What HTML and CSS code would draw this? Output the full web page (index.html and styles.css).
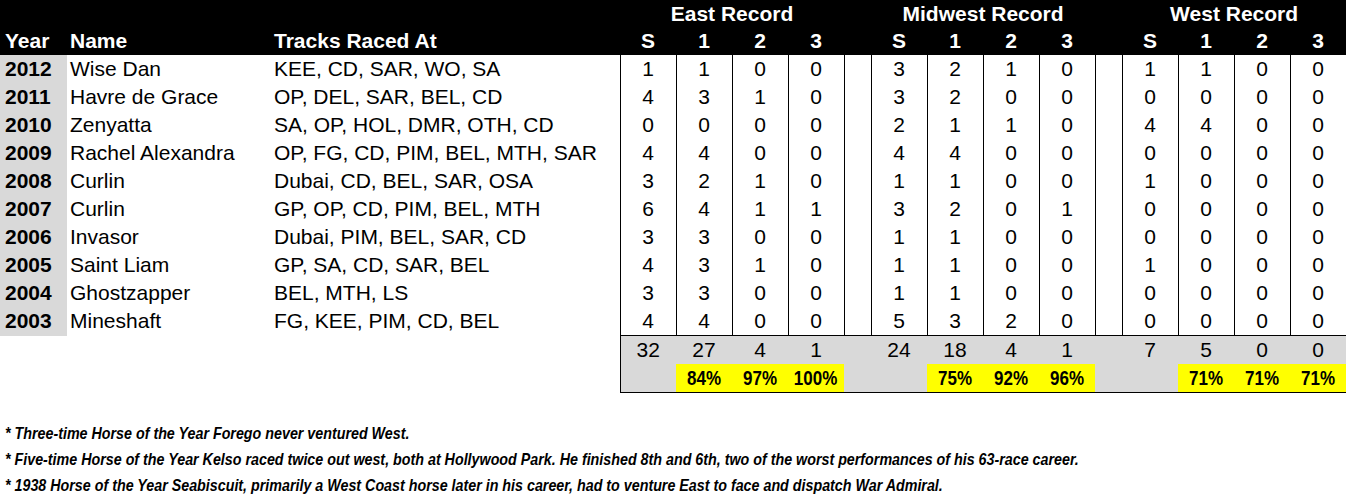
FILE: index.html
```html
<!DOCTYPE html>
<html>
<head>
<meta charset="utf-8">
<link rel="stylesheet" href="styles.css">
</head>
<body>
<table class="rec">
  <colgroup>
    <col class="c-year"><col class="c-name"><col class="c-tracks">
    <col class="c-n"><col class="c-n"><col class="c-n"><col class="c-n">
    <col class="c-sp">
    <col class="c-n"><col class="c-n"><col class="c-n"><col class="c-n">
    <col class="c-sp">
    <col class="c-n"><col class="c-n"><col class="c-n"><col class="c-n">
  </colgroup>
  <thead>
    <tr class="h1">
      <th></th><th></th><th></th>
      <th colspan="4" class="grp">East Record</th>
      <th></th>
      <th colspan="4" class="grp">Midwest Record</th>
      <th></th>
      <th colspan="4" class="grp">West Record</th>
    </tr>
    <tr class="h2">
      <th class="l year">Year</th><th class="l">Name</th><th class="l">Tracks Raced At</th>
      <th>S</th><th>1</th><th>2</th><th>3</th><th></th>
      <th>S</th><th>1</th><th>2</th><th>3</th><th></th>
      <th>S</th><th>1</th><th>2</th><th>3</th>
    </tr>
  </thead>
  <tbody>
    <tr><td class="year">2012</td><td class="name">Wise Dan</td><td class="tr">KEE, CD, SAR, WO, SA</td>
      <td class="n first">1</td><td class="n">1</td><td class="n">0</td><td class="n">0</td><td class="sp"></td>
      <td class="n">3</td><td class="n">2</td><td class="n">1</td><td class="n">0</td><td class="sp"></td>
      <td class="n">1</td><td class="n">1</td><td class="n">0</td><td class="n">0</td></tr>
    <tr><td class="year">2011</td><td class="name">Havre de Grace</td><td class="tr">OP, DEL, SAR, BEL, CD</td>
      <td class="n first">4</td><td class="n">3</td><td class="n">1</td><td class="n">0</td><td class="sp"></td>
      <td class="n">3</td><td class="n">2</td><td class="n">0</td><td class="n">0</td><td class="sp"></td>
      <td class="n">0</td><td class="n">0</td><td class="n">0</td><td class="n">0</td></tr>
    <tr><td class="year">2010</td><td class="name">Zenyatta</td><td class="tr">SA, OP, HOL, DMR, OTH, CD</td>
      <td class="n first">0</td><td class="n">0</td><td class="n">0</td><td class="n">0</td><td class="sp"></td>
      <td class="n">2</td><td class="n">1</td><td class="n">1</td><td class="n">0</td><td class="sp"></td>
      <td class="n">4</td><td class="n">4</td><td class="n">0</td><td class="n">0</td></tr>
    <tr><td class="year">2009</td><td class="name">Rachel Alexandra</td><td class="tr">OP, FG, CD, PIM, BEL, MTH, SAR</td>
      <td class="n first">4</td><td class="n">4</td><td class="n">0</td><td class="n">0</td><td class="sp"></td>
      <td class="n">4</td><td class="n">4</td><td class="n">0</td><td class="n">0</td><td class="sp"></td>
      <td class="n">0</td><td class="n">0</td><td class="n">0</td><td class="n">0</td></tr>
    <tr><td class="year">2008</td><td class="name">Curlin</td><td class="tr">Dubai, CD, BEL, SAR, OSA</td>
      <td class="n first">3</td><td class="n">2</td><td class="n">1</td><td class="n">0</td><td class="sp"></td>
      <td class="n">1</td><td class="n">1</td><td class="n">0</td><td class="n">0</td><td class="sp"></td>
      <td class="n">1</td><td class="n">0</td><td class="n">0</td><td class="n">0</td></tr>
    <tr><td class="year">2007</td><td class="name">Curlin</td><td class="tr">GP, OP, CD, PIM, BEL, MTH</td>
      <td class="n first">6</td><td class="n">4</td><td class="n">1</td><td class="n">1</td><td class="sp"></td>
      <td class="n">3</td><td class="n">2</td><td class="n">0</td><td class="n">1</td><td class="sp"></td>
      <td class="n">0</td><td class="n">0</td><td class="n">0</td><td class="n">0</td></tr>
    <tr><td class="year">2006</td><td class="name">Invasor</td><td class="tr">Dubai, PIM, BEL, SAR, CD</td>
      <td class="n first">3</td><td class="n">3</td><td class="n">0</td><td class="n">0</td><td class="sp"></td>
      <td class="n">1</td><td class="n">1</td><td class="n">0</td><td class="n">0</td><td class="sp"></td>
      <td class="n">0</td><td class="n">0</td><td class="n">0</td><td class="n">0</td></tr>
    <tr><td class="year">2005</td><td class="name">Saint Liam</td><td class="tr">GP, SA, CD, SAR, BEL</td>
      <td class="n first">4</td><td class="n">3</td><td class="n">1</td><td class="n">0</td><td class="sp"></td>
      <td class="n">1</td><td class="n">1</td><td class="n">0</td><td class="n">0</td><td class="sp"></td>
      <td class="n">1</td><td class="n">0</td><td class="n">0</td><td class="n">0</td></tr>
    <tr><td class="year">2004</td><td class="name">Ghostzapper</td><td class="tr">BEL, MTH, LS</td>
      <td class="n first">3</td><td class="n">3</td><td class="n">0</td><td class="n">0</td><td class="sp"></td>
      <td class="n">1</td><td class="n">1</td><td class="n">0</td><td class="n">0</td><td class="sp"></td>
      <td class="n">0</td><td class="n">0</td><td class="n">0</td><td class="n">0</td></tr>
    <tr class="last"><td class="year">2003</td><td class="name">Mineshaft</td><td class="tr">FG, KEE, PIM, CD, BEL</td>
      <td class="n first">4</td><td class="n">4</td><td class="n">0</td><td class="n">0</td><td class="sp"></td>
      <td class="n">5</td><td class="n">3</td><td class="n">2</td><td class="n">0</td><td class="sp"></td>
      <td class="n">0</td><td class="n">0</td><td class="n">0</td><td class="n">0</td></tr>
    <tr class="tot">
      <td class="blank"></td><td class="blank"></td><td class="blank"></td>
      <td class="t first">32</td><td class="t">27</td><td class="t">4</td><td class="t">1</td><td class="t"></td>
      <td class="t">24</td><td class="t">18</td><td class="t">4</td><td class="t">1</td><td class="t"></td>
      <td class="t">7</td><td class="t">5</td><td class="t">0</td><td class="t">0</td>
    </tr>
    <tr class="pct">
      <td class="blank"></td><td class="blank"></td><td class="blank"></td>
      <td class="t first"></td><td class="y"><span class="pc">84%</span></td><td class="y"><span class="pc">97%</span></td><td class="y"><span class="pc">100%</span></td><td class="t"></td>
      <td class="t"></td><td class="y"><span class="pc">75%</span></td><td class="y"><span class="pc">92%</span></td><td class="y"><span class="pc">96%</span></td><td class="t"></td>
      <td class="t"></td><td class="y"><span class="pc">71%</span></td><td class="y"><span class="pc">71%</span></td><td class="y"><span class="pc">71%</span></td>
    </tr>
  </tbody>
</table>
<div class="notes">
  <p>* Three-time Horse of the Year Forego never ventured West.</p>
  <p>* Five-time Horse of the Year Kelso raced twice out west, both at Hollywood Park. He finished 8th and 6th, two of the worst performances of his 63-race career.</p>
  <p>* 1938 Horse of the Year Seabiscuit, primarily a West Coast horse later in his career, had to venture East to face and dispatch War Admiral.</p>
</div>
</body>
</html>
```
FILE: styles.css
```css
html, body {
  margin: 0;
  padding: 0;
  background: #ffffff;
}
body {
  font-family: "Liberation Sans", Arial, sans-serif;
  color: #000;
  width: 1346px;
  overflow: hidden;
}
.rec {
  border-collapse: collapse;
  table-layout: fixed;
  width: 1346px;
}
.c-year { width: 67px; }
.c-name { width: 204px; }
.c-tracks { width: 349px; }
.c-n { width: 56px; }
.c-sp { width: 27px; }

.rec th, .rec td {
  padding: 0;
  white-space: nowrap;
  overflow: hidden;
}
.rec thead th {
  background: #000;
  color: #fff;
  font-weight: bold;
  font-size: 21px;
  text-align: center;
  border: none;
}
.h1 th { height: 27px; line-height: 26px; }
.h2 th { height: 28px; line-height: 28px; }
.rec thead th.l { text-align: left; padding-left: 3px; }
.rec thead th.year { padding-left: 5px; }

.rec tbody td {
  height: 28px;
  line-height: 28px;
  font-size: 21px;
}
td.year {
  background: #d9d9d9;
  font-weight: bold;
  padding-left: 5px;
}
td.name, td.tr { padding-left: 3px; }
td.n {
  text-align: center;
  border-left: 1px solid #000;
  border-right: 1px solid #000;
}
td.sp { border: none; }
tr.last td.n, tr.last td.sp { border-bottom: 1px solid #000; }

td.t {
  background: #d9d9d9;
  text-align: center;
}
td.first { border-left: 1px solid #000; }
tr.pct td.t, tr.pct td.y { border-bottom: 1px solid #000; }
tr.pct td { height: 28px; }
.rec tbody td.y {
  background: #ffff00;
  text-align: center;
  font-weight: bold;
  font-size: 20px;
}
.pc {
  display: inline-block;
  transform: scaleX(0.85);
}
td.blank { background: #fff; }

.notes {
  margin-top: 28px;
  padding-left: 5px;
}
.notes p {
  margin: 0;
  font-size: 17px;
  line-height: 26px;
  font-weight: bold;
  font-style: italic;
  white-space: nowrap;
  transform: scaleX(0.84);
  transform-origin: 0 50%;
}
```
